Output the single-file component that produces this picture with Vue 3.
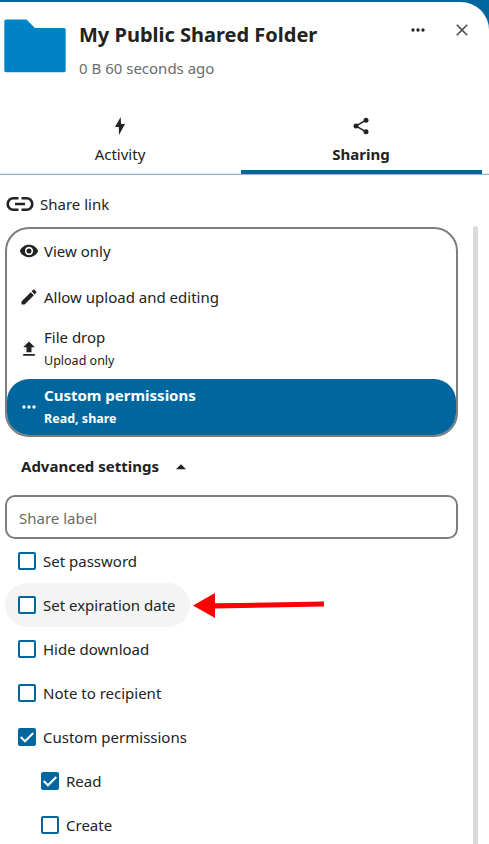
<script setup>
import { ref, reactive } from 'vue'

const tab = ref('sharing')
const permission = ref('custom')
const open = ref(true)
const shareLabel = ref('')

const permissions = [
  {
    id: 'view',
    title: 'View only',
    icon: 'M12 9a3 3 0 0 0-3 3 3 3 0 0 0 3 3 3 3 0 0 0 3-3 3 3 0 0 0-3-3m0 8a5 5 0 0 1-5-5 5 5 0 0 1 5-5 5 5 0 0 1 5 5 5 5 0 0 1-5 5m0-12.5C7 4.500 2.730 7.610 1 12c1.730 4.390 6 7.500 11 7.500s9.270-3.110 11-7.500c-1.730-4.390-6-7.500-11-7.500z',
  },
  {
    id: 'edit',
    title: 'Allow upload and editing',
    icon: 'M20.710 7.040c.39-.39.39-1.040 0-1.410l-2.340-2.340c-.37-.39-1.020-.39-1.410 0l-1.840 1.830 3.750 3.750M3 17.250V21h3.750L17.810 9.930l-3.750-3.750L3 17.250z',
  },
  {
    id: 'drop',
    title: 'File drop',
    subtitle: 'Upload only',
    icon: 'M9 16v-6H5l7-7 7 7h-4v6H9m-4 4v-2h14v2H5z',
  },
  {
    id: 'custom',
    title: 'Custom permissions',
    subtitle: 'Read, share',
    icon: 'M16 12a2 2 0 0 1 2-2 2 2 0 0 1 2 2 2 2 0 0 1-2 2 2 2 0 0 1-2-2m-6 0a2 2 0 0 1 2-2 2 2 0 0 1 2 2 2 2 0 0 1-2 2 2 2 0 0 1-2-2m-6 0a2 2 0 0 1 2-2 2 2 0 0 1 2 2 2 2 0 0 1-2 2 2 2 0 0 1-2-2z',
  },
]

const options = reactive([
  { id: 'password', label: 'Set password', checked: false },
  { id: 'expiration', label: 'Set expiration date', checked: false, highlighted: true },
  { id: 'download', label: 'Hide download', checked: false },
  { id: 'note', label: 'Note to recipient', checked: false },
  { id: 'custom', label: 'Custom permissions', checked: true },
  { id: 'read', label: 'Read', checked: true, nested: true },
  { id: 'create', label: 'Create', checked: false, nested: true },
])
</script>

<template>
  <div class="app">
    <aside class="sidebar">
      <header class="header">
        <svg class="folder" viewBox="0 0 62 54" aria-hidden="true">
          <path d="M2 .5H22.500L31 9H60Q61.700 9 61.700 10.700V51.500Q61.700 53.200 60 53.200H2Q.3 53.200 .3 51.500V2.200Q.3 .5 2 .5Z" fill="#0082c9" />
        </svg>
        <div class="heading">
          <h2>My Public Shared Folder</h2>
          <p>0 B 60 seconds ago</p>
        </div>
        <button class="icon-button" type="button" aria-label="Actions">
          <svg width="20" height="20" viewBox="0 0 24 24"><path :d="permissions[3].icon" /></svg>
        </button>
        <button class="icon-button close" type="button" aria-label="Close sidebar">
          <svg width="20" height="20" viewBox="0 0 24 24">
            <path d="M19 6.410 17.590 5 12 10.590 6.410 5 5 6.410 10.590 12 5 17.590 6.410 19 12 13.410 17.590 19 19 17.590 13.410 12 19 6.410z" />
          </svg>
        </button>
      </header>

      <nav class="tabs" role="tablist">
        <button type="button" role="tab" class="tab" :class="{ active: tab === 'activity' }" :aria-selected="tab === 'activity'" @click="tab = 'activity'">
          <svg width="20" height="20" viewBox="0 0 20 20"><path d="M10.700 1 5 11H8.800L9 19 15 8H11Z" /></svg>
          <span>Activity</span>
        </button>
        <button type="button" role="tab" class="tab" :class="{ active: tab === 'sharing' }" :aria-selected="tab === 'sharing'" @click="tab = 'sharing'">
          <svg width="20" height="20" viewBox="0 0 20 20">
            <path d="M15 4.200 5 10 15 15.800" fill="none" stroke="#222" stroke-width="1.500" />
            <circle cx="15" cy="4.200" r="2.500" /><circle cx="5" cy="10" r="2.500" /><circle cx="15" cy="15.800" r="2.500" />
          </svg>
          <span>Sharing</span>
        </button>
      </nav>

      <div class="share-link">
        <svg class="link-icon" width="28" height="16" viewBox="0 0 28 16" aria-hidden="true">
          <path d="M12.500 2.200H7.500a5.800 5.800 0 0 0 0 11.600H12.500M15.500 2.200h5a5.800 5.800 0 0 1 0 11.600h-5M9 8h10" />
        </svg>
        <span>Share link</span>
      </div>

      <div class="content">
        <main class="settings">
          <div class="permissions" role="radiogroup" aria-label="Share permissions">
            <button
              v-for="item in permissions"
              :key="item.id"
              type="button"
              role="radio"
              class="permission"
              :class="{ selected: permission === item.id }"
              :aria-checked="permission === item.id"
              @click="permission = item.id"
            >
              <svg width="20" height="20" viewBox="0 0 24 24"><path :d="item.icon" /></svg>
              <span class="permission-text">
                <span>{{ item.title }}</span>
                <small v-if="item.subtitle">{{ item.subtitle }}</small>
              </span>
            </button>
          </div>

          <button class="advanced" type="button" :aria-expanded="open" @click="open = !open">
            <span>Advanced settings</span>
            <svg width="20" height="20" viewBox="0 0 24 24" :class="{ flipped: !open }"><path d="m6 16 6-6 6 6H6z" /></svg>
          </button>

          <template v-if="open">
            <input v-model="shareLabel" class="text-field" type="text" placeholder="Share label" aria-label="Share label" />
            <ul class="options">
              <li v-for="option in options" :key="option.id" :class="{ nested: option.nested }">
                <label class="option" :class="{ highlighted: option.highlighted }">
                  <input v-model="option.checked" type="checkbox" />
                  <svg width="24" height="24" viewBox="0 0 24 24" aria-hidden="true">
                    <template v-if="option.checked">
                      <rect x="3" y="3" width="18" height="18" rx="2" fill="#00679e" />
                      <path d="m5.700 12 4.300 4.300 8.300-8.300" fill="none" stroke="#fff" stroke-width="2" />
                    </template>
                    <rect v-else x="4" y="4" width="16" height="16" rx="1" fill="#fff" stroke="#00679e" stroke-width="2" />
                  </svg>
                  <span>{{ option.label }}</span>
                </label>
                <svg v-if="option.highlighted" class="pointer" width="132" height="26" viewBox="0 0 132 26" aria-hidden="true">
                  <path d="M0 12.600 22 0V10.300L131 8.600V13.600L22 15.400V25Z" fill="#f00" />
                </svg>
              </li>
            </ul>
          </template>
        </main>
        <div class="scrollbar"></div>
      </div>
    </aside>
  </div>
</template>

<style>
body {
  margin: 0;
  overflow: hidden;
}
</style>

<style scoped>
.app {
  box-sizing: border-box;
  height: 100vh;
  padding-top: 2px;
  background: #00679e;
  color: #222;
  font: 15px/24px "Noto Sans", sans-serif;
}
.sidebar {
  display: flex;
  flex-direction: column;
  height: 100%;
  overflow: hidden;
  background: #fff;
  border-radius: 0 28px 0 0;
}
svg {
  display: block;
  flex: none;
  fill: currentColor;
}
button {
  margin: 0;
  padding: 0;
  border: 0;
  background: none;
  color: inherit;
  font: inherit;
  cursor: pointer;
}
.header {
  display: flex;
  align-items: flex-start;
  height: 104px;
  padding: 6px 5px 0 4px;
  box-sizing: border-box;
}
.folder {
  width: 62px;
  height: 54px;
  margin: 11px 13px 0 0;
}
.heading {
  flex: 1;
  min-width: 0;
  padding-top: 12px;
}
h2 {
  margin: 0;
  font-size: 20px;
  line-height: 30px;
  white-space: nowrap;
}
p {
  margin: 6px 0 0;
  color: #6b6b6b;
}
.icon-button {
  display: flex;
  align-items: center;
  justify-content: center;
  width: 44px;
  height: 44px;
}
.close {
  color: #555;
}
.tabs {
  display: flex;
  padding-right: 7px;
  border-bottom: 1px solid #8bb8d2;
  box-shadow: inset 0 -1px #dcebf3;
}
.tab {
  display: flex;
  flex: 1;
  flex-direction: column;
  align-items: center;
  gap: 6px;
  height: 68px;
  padding: 10px 1px 0 0;
  box-sizing: border-box;
}
.tab.active {
  border-bottom: 4px solid #00679e;
  font-weight: bold;
}
.share-link {
  display: flex;
  align-items: center;
  gap: 6px;
  padding: 17px 6px 10px;
}
.link-icon {
  fill: none;
  stroke: #222;
  stroke-width: 2.6px;
}
.content {
  display: flex;
  flex: 1;
  gap: 15px;
  min-height: 0;
  padding-right: 11px;
  overflow: hidden;
}
.settings {
  flex: 1;
  min-width: 0;
  padding: 1px 0 0 5px;
}
.scrollbar {
  width: 5px;
  border-radius: 3px 3px 0 0;
  background: #dadada;
}
.permissions {
  display: flex;
  flex-direction: column;
  gap: 2px;
  border: 2px solid #7d7d7d;
  border-radius: 24px;
}
.permission {
  display: flex;
  align-items: center;
  gap: 5px;
  min-height: 44px;
  padding: 4px 12px;
  border-radius: 22px;
  text-align: left;
}
.permission-text {
  display: flex;
  flex-direction: column;
}
small {
  font-size: smaller;
}
.permission.selected {
  background: #00679e;
  color: #fff;
  font-weight: bold;
}
.advanced {
  display: flex;
  align-items: center;
  gap: 12px;
  height: 44px;
  margin: 7px 0;
  padding: 0 16px;
  font-weight: bold;
}
.flipped {
  transform: rotate(180deg);
}
.text-field {
  display: block;
  width: 100%;
  height: 44px;
  box-sizing: border-box;
  padding: 2px 12px 0;
  border: 2px solid #7d7d7d;
  border-radius: 10px;
  background: #fff;
  color: inherit;
  font: inherit;
}
.text-field::placeholder {
  color: #6b6b6b;
  opacity: 1;
}
.options {
  margin: 0;
  padding: 0;
  list-style: none;
}
.options li {
  position: relative;
  display: flex;
}
.nested {
  padding-left: 23px;
}
.option {
  position: relative;
  display: flex;
  align-items: center;
  gap: 4px;
  height: 44px;
  padding: 0 14px 0 10px;
  box-sizing: border-box;
  border-radius: 22px;
  cursor: pointer;
}
.option input {
  position: absolute;
  width: 24px;
  height: 24px;
  margin: 0;
  opacity: 0;
}
.highlighted {
  background: #f4f4f4;
}
.pointer {
  position: absolute;
  top: 10px;
  left: 188px;
}
</style>
